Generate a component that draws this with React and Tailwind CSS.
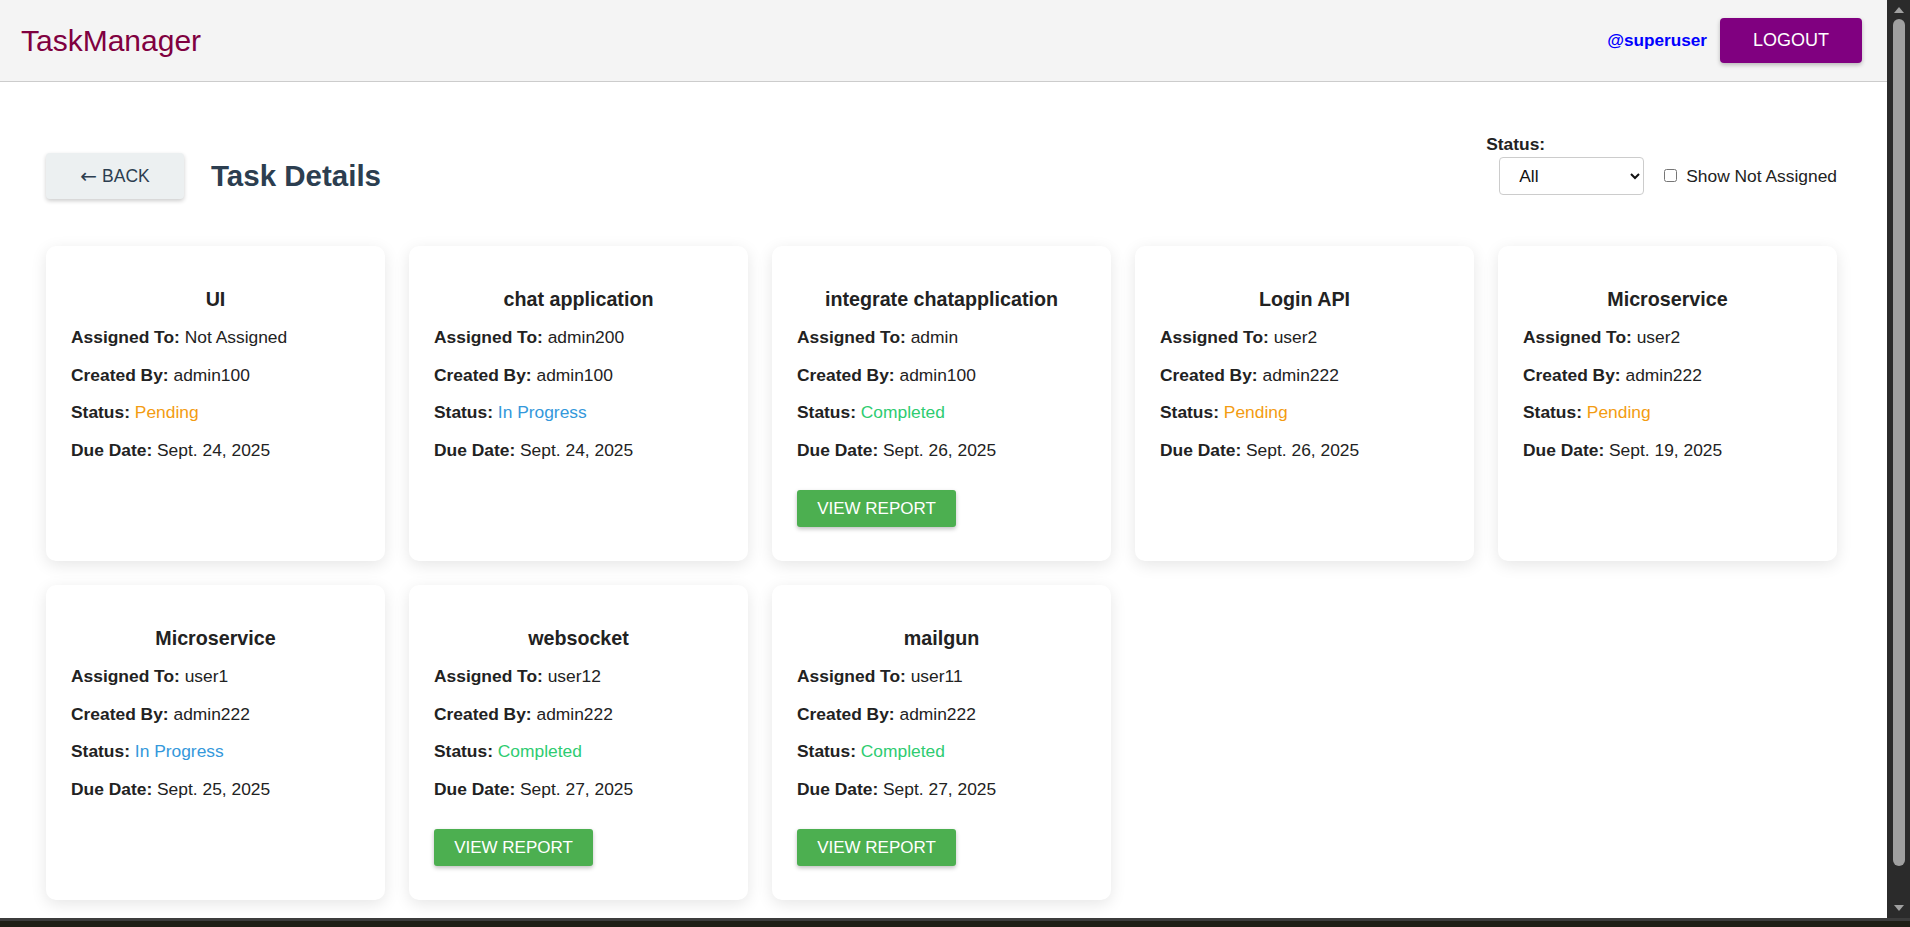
import React from "react";

const tasks = [
  { title: "UI", assigned: "Not Assigned", created: "admin100", status: "Pending", due: "Sept. 24, 2025", report: false },
  { title: "chat application", assigned: "admin200", created: "admin100", status: "In Progress", due: "Sept. 24, 2025", report: false },
  { title: "integrate chatapplication", assigned: "admin", created: "admin100", status: "Completed", due: "Sept. 26, 2025", report: true },
  { title: "Login API", assigned: "user2", created: "admin222", status: "Pending", due: "Sept. 26, 2025", report: false },
  { title: "Microservice", assigned: "user2", created: "admin222", status: "Pending", due: "Sept. 19, 2025", report: false },
  { title: "Microservice", assigned: "user1", created: "admin222", status: "In Progress", due: "Sept. 25, 2025", report: false },
  { title: "websocket", assigned: "user12", created: "admin222", status: "Completed", due: "Sept. 27, 2025", report: true },
  { title: "mailgun", assigned: "user11", created: "admin222", status: "Completed", due: "Sept. 27, 2025", report: true },
];

function StatusText({ status }) {
  if (status === "Pending") return <span className="text-[#f39c12]">{status}</span>;
  if (status === "In Progress") return <span className="text-[#3498db]">{status}</span>;
  return <span className="text-[#2ecc71]">{status}</span>;
}

function Card({ t }) {
  return (
    <div className="bg-white rounded-[10px] shadow-[0_4px_16px_rgba(0,0,0,0.1)] px-[25px] pt-[42px] pb-[34px] text-[#222]">
      <h3 className="text-center font-bold text-[19.7px] leading-[22px]">{t.title}</h3>
      <div className="mt-[9px] text-[17.4px]">
        <p className="leading-[37.5px] whitespace-nowrap"><b>Assigned To:</b> {t.assigned}</p>
        <p className="leading-[37.5px] whitespace-nowrap"><b>Created By:</b> {t.created}</p>
        <p className="leading-[37.5px] whitespace-nowrap"><b>Status:</b> <StatusText status={t.status} /></p>
        <p className="leading-[37.5px] whitespace-nowrap"><b>Due Date:</b> {t.due}</p>
      </div>
      {t.report && (
        <button className="mt-[21px] h-[37px] w-[159px] bg-[#4caf50] text-white text-[17px] rounded-[3px] shadow-[0_2px_4px_rgba(0,0,0,0.25)]">
          VIEW REPORT
        </button>
      )}
    </div>
  );
}

export default function App() {
  return (
    <div className="w-[1910px] h-[927px] overflow-hidden flex flex-col bg-[#2b2b2b]" style={{ fontFamily: '"Liberation Sans", Arial, sans-serif' }}>
      <div className="flex flex-1 min-h-0">
        <div className="flex-1 min-w-0 bg-white overflow-hidden">
          <header className="h-[82px] bg-[#f4f4f4] border-b border-[#cccccc] flex items-center justify-between pl-[21px] pr-[25px]">
            <div className="text-[30px] text-[#800040] leading-none">TaskManager</div>
            <div className="flex items-center gap-[13px]">
              <span className="text-[17.2px] font-bold text-[#0000ff]">@superuser</span>
              <button className="h-[45px] w-[142px] bg-[#800080] text-white text-[18px] rounded-[4px] shadow-[0_2px_4px_rgba(0,0,0,0.25)]">
                LOGOUT
              </button>
            </div>
          </header>
          <main className="pl-[46px] pr-[50px] pb-[40px]">
            <div className="flex justify-between items-start pt-[52px]">
              <div className="flex items-center gap-[27px] mt-[19px]">
                <button className="h-[46px] w-[138px] bg-[#ecf0f1] text-[#2c3e50] text-[17.5px] rounded-[4px] shadow-[0_2px_4px_rgba(0,0,0,0.2)] flex items-center justify-center gap-[5px]">
                  <span className="text-[20px] leading-none" style={{ fontFamily: '"DejaVu Sans", sans-serif' }}>←</span>
                  <span>BACK</span>
                </button>
                <h1 className="text-[29.5px] font-bold text-[#2c3e50]">Task Details</h1>
              </div>
              <div className="flex flex-col items-start">
                <label className="text-[17.4px] font-bold text-[#222] leading-[20px]">Status:</label>
                <div className="flex items-center mt-[3px] ml-[13px]">
                  <select className="h-[38px] w-[145px] border border-[#cccccc] rounded-[4px] pl-[15px] pr-[6px] text-[17.4px] text-[#111] bg-white">
                    <option>All</option>
                    <option>Pending</option>
                    <option>In Progress</option>
                    <option>Completed</option>
                  </select>
                  <label className="flex items-center ml-[20px] text-[17.4px] text-[#222]">
                    <input type="checkbox" className="w-[13px] h-[13px] m-0 mr-[9px]" />
                    Show Not Assigned
                  </label>
                </div>
              </div>
            </div>
            <div className="grid grid-cols-5 gap-[24px] mt-[47px]">
              {tasks.map((t, i) => (
                <Card key={i} t={t} />
              ))}
            </div>
          </main>
        </div>
        <div className="w-[23px] bg-[#2b2b2b] flex flex-col items-center pt-[4px] pb-[4px]">
          <svg width="12" height="8" viewBox="0 0 12 8" className="mt-[2px]">
            <polygon points="6,1 11,7 1,7" fill="#a0a0a0" />
          </svg>
          <div className="w-[12px] flex-1 bg-[#a0a0a0] rounded-[6px] mt-[5px] mb-[38px]" />
          <svg width="12" height="8" viewBox="0 0 12 8" className="mb-[2px]">
            <polygon points="1,1 11,1 6,7" fill="#a0a0a0" />
          </svg>
        </div>
      </div>
      <div className="h-[9px] border-t-[3px] border-[#3c3c3c] bg-[#1f1f16]" />
    </div>
  );
}
